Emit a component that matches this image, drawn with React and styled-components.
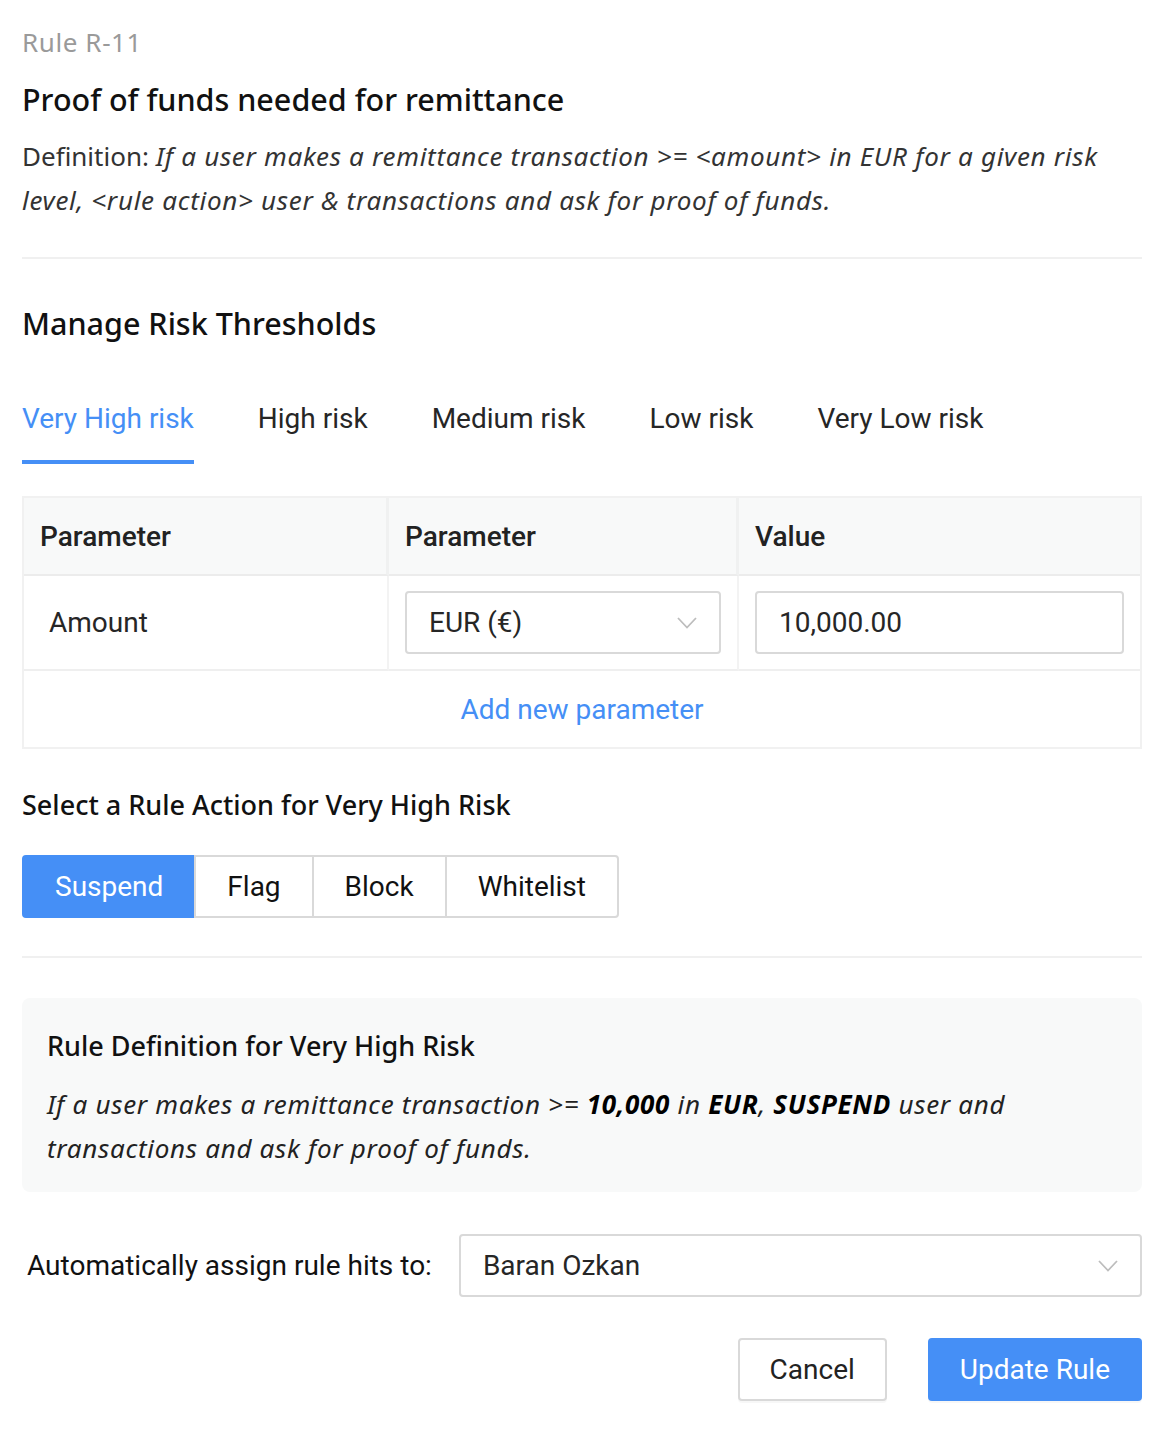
import React, { useState } from 'react';
import styled, { createGlobalStyle } from 'styled-components';

const BLUE = '#458ff6';

const GlobalStyle = createGlobalStyle`
  html, body {
    margin: 0;
    padding: 0;
    background: #ffffff;
  }
  * { box-sizing: border-box; }
`;

const Page = styled.div`
  width: 1164px;
  padding: 22px 22px 30px;
  font-family: Roboto, "Noto Sans", sans-serif;
  color: #1f1f1f;
`;

const RuleId = styled.div`
  font-family: "Noto Sans", sans-serif;
  font-size: 26px;
  letter-spacing: 0.6px;
  line-height: 40px;
  color: #9a9a9a;
`;

const Title = styled.h1`
  margin: 16px 0 0;
  font-family: "Noto Sans", sans-serif;
  font-size: 30.5px;
  line-height: 42px;
  font-weight: 500;
  color: #111;
`;

const Definition = styled.p`
  margin: 14px 0 0;
  font-family: "Noto Sans", sans-serif;
  font-size: 26px;
  line-height: 44px;
  color: #333;

  em { font-style: italic; letter-spacing: 0.7px; }
`;

const Divider = styled.hr`
  border: 0;
  border-top: 2px solid #f0f0f0;
  margin: ${p => p.$top || 0}px 0 0;
`;

const SectionTitle = styled.h2`
  margin: 42px 0 0;
  font-family: "Noto Sans", sans-serif;
  font-size: 30.5px;
  line-height: 44px;
  font-weight: 500;
  color: #111;
`;

const Tabs = styled.div`
  display: flex;
  gap: 64px;
  margin-top: 57px;
`;

const Tab = styled.button`
  border: 0;
  background: none;
  padding: 0 0 24px;
  font-family: Roboto, sans-serif;
  font-size: 28px;
  line-height: 34px;
  color: ${p => (p.$active ? BLUE : '#262626')};
  border-bottom: 4px solid ${p => (p.$active ? BLUE : 'transparent')};
  cursor: pointer;
`;

const Table = styled.div`
  margin-top: 32px;
  border: 2px solid #f1f1f1;
  display: grid;
  grid-template-columns: 365px 350px 1fr;
`;

const HeadCell = styled.div`
  background: #f8f9f9;
  height: 78px;
  display: flex;
  align-items: center;
  padding: 0 16px;
  font-size: 28px;
  font-weight: 500;
  color: #222;
  border-right: ${p => (p.$last ? 'none' : '3px solid #f0f1f1')};
  border-bottom: 2px solid #ececec;
`;

const Cell = styled.div`
  height: 95px;
  display: flex;
  align-items: center;
  padding: 0 ${p => (p.$pad ? p.$pad : 16)}px;
  font-size: 28px;
  color: #262626;
  border-right: ${p => (p.$last ? 'none' : '2px solid #f3f3f3')};
  border-bottom: 2px solid #efefef;
`;

const AddRow = styled.div`
  grid-column: 1 / -1;
  height: 76px;
  display: flex;
  align-items: center;
  justify-content: center;
  font-size: 28px;
  color: ${BLUE};
`;

const SelectBox = styled.div`
  flex: 1;
  height: 63px;
  border: 2px solid #d9d9d9;
  border-radius: 4px;
  display: flex;
  align-items: center;
  justify-content: space-between;
  padding: 0 22px 0 22px;
  font-size: 28px;
  color: #262626;
  background: #fff;
`;

const InputBox = styled.div`
  flex: 1;
  height: 63px;
  border: 2px solid #d9d9d9;
  border-radius: 4px;
  display: flex;
  align-items: center;
  padding: 0 22px;
  font-size: 28px;
  color: #262626;
`;

const Chevron = () => (
  <svg width="20" height="12" viewBox="0 0 20 12" fill="none">
    <path d="M1 1 L10 10.5 L19 1" stroke="#bdbdbd" strokeWidth="1.8" />
  </svg>
);

const ActionTitle = styled.h3`
  margin: 38px 0 0;
  font-family: "Noto Sans", sans-serif;
  font-size: 27px;
  line-height: 36px;
  font-weight: 500;
  color: #111;
`;

const ButtonGroup = styled.div`
  display: flex;
  margin-top: 32px;
`;

const GroupButton = styled.button`
  height: 63px;
  padding: 0 ${p => p.$pad}px;
  font-family: Roboto, sans-serif;
  font-size: 28px;
  color: ${p => (p.$active ? '#fff' : '#111')};
  background: ${p => (p.$active ? BLUE : '#fff')};
  border: 2px solid ${p => (p.$active ? BLUE : '#d9d9d9')};
  margin-left: -2px;
  cursor: pointer;

  &:first-child {
    margin-left: 0;
    border-radius: 4px 0 0 4px;
  }
  &:last-child {
    border-radius: 0 4px 4px 0;
  }
`;

const SummaryBox = styled.div`
  margin-top: 40px;
  background: #f8f9f9;
  border-radius: 8px;
  padding: 26px 25px 22px;
`;

const SummaryTitle = styled.h3`
  margin: 0;
  font-family: "Noto Sans", sans-serif;
  font-size: 27px;
  line-height: 44px;
  font-weight: 500;
  color: #111;
`;

const SummaryText = styled.p`
  margin: 14px 0 0;
  font-family: "Noto Sans", sans-serif;
  font-style: italic;
  font-size: 26px;
  letter-spacing: 0.7px;
  line-height: 44px;
  color: #222;

  strong { font-weight: 700; color: #000; }
`;

const AssignRow = styled.div`
  display: flex;
  align-items: center;
  gap: 27px;
  margin-top: 42px;
  padding-left: 5px;
`;

const AssignLabel = styled.span`
  font-size: 28px;
  color: #111;
  white-space: nowrap;
`;

const Footer = styled.div`
  display: flex;
  justify-content: flex-end;
  gap: 41px;
  margin-top: 41px;
`;

const FooterButton = styled.button`
  height: 63px;
  padding: 0 ${p => p.$pad}px;
  border-radius: 4px;
  font-family: Roboto, sans-serif;
  font-size: 28px;
  cursor: pointer;
  color: ${p => (p.$primary ? '#fff' : '#222')};
  background: ${p => (p.$primary ? BLUE : '#fff')};
  border: 2px solid ${p => (p.$primary ? BLUE : '#d9d9d9')};
  box-shadow: 0 2px 0 rgba(0, 0, 0, 0.03);
`;

const riskTabs = ['Very High risk', 'High risk', 'Medium risk', 'Low risk', 'Very Low risk'];
const actions = ['Suspend', 'Flag', 'Block', 'Whitelist'];

export default function App() {
  const [tab, setTab] = useState(0);
  const [action, setAction] = useState(0);

  return (
    <Page>
      <GlobalStyle />
      <RuleId>Rule R-11</RuleId>
      <Title>Proof of funds needed for remittance</Title>
      <Definition>
        Definition:{' '}
        <em>
          If a user makes a remittance transaction &gt;= &lt;amount&gt; in EUR for a given risk
          level, &lt;rule action&gt; user &amp; transactions and ask for proof of funds.
        </em>
      </Definition>
      <Divider $top={35} />

      <SectionTitle>Manage Risk Thresholds</SectionTitle>
      <Tabs>
        {riskTabs.map((t, i) => (
          <Tab key={t} $active={i === tab} onClick={() => setTab(i)}>
            {t}
          </Tab>
        ))}
      </Tabs>

      <Table>
        <HeadCell>Parameter</HeadCell>
        <HeadCell>Parameter</HeadCell>
        <HeadCell $last>Value</HeadCell>

        <Cell $pad={25}>Amount</Cell>
        <Cell>
          <SelectBox>
            EUR (€)
            <Chevron />
          </SelectBox>
        </Cell>
        <Cell $last>
          <InputBox>10,000.00</InputBox>
        </Cell>

        <AddRow>Add new parameter</AddRow>
      </Table>

      <ActionTitle>Select a Rule Action for Very High Risk</ActionTitle>
      <ButtonGroup>
        {actions.map((a, i) => (
          <GroupButton key={a} $pad={31} $active={i === action} onClick={() => setAction(i)}>
            {a}
          </GroupButton>
        ))}
      </ButtonGroup>
      <Divider $top={38} />

      <SummaryBox>
        <SummaryTitle>Rule Definition for Very High Risk</SummaryTitle>
        <SummaryText>
          If a user makes a remittance transaction &gt;= <strong>10,000</strong> in <strong>EUR</strong>,{' '}
          <strong>SUSPEND</strong> user and transactions and ask for proof of funds.
        </SummaryText>
      </SummaryBox>

      <AssignRow>
        <AssignLabel>Automatically assign rule hits to:</AssignLabel>
        <SelectBox>
          Baran Ozkan
          <Chevron />
        </SelectBox>
      </AssignRow>

      <Footer>
        <FooterButton $pad={30}>Cancel</FooterButton>
        <FooterButton $primary $pad={30}>Update Rule</FooterButton>
      </Footer>
    </Page>
  );
}
